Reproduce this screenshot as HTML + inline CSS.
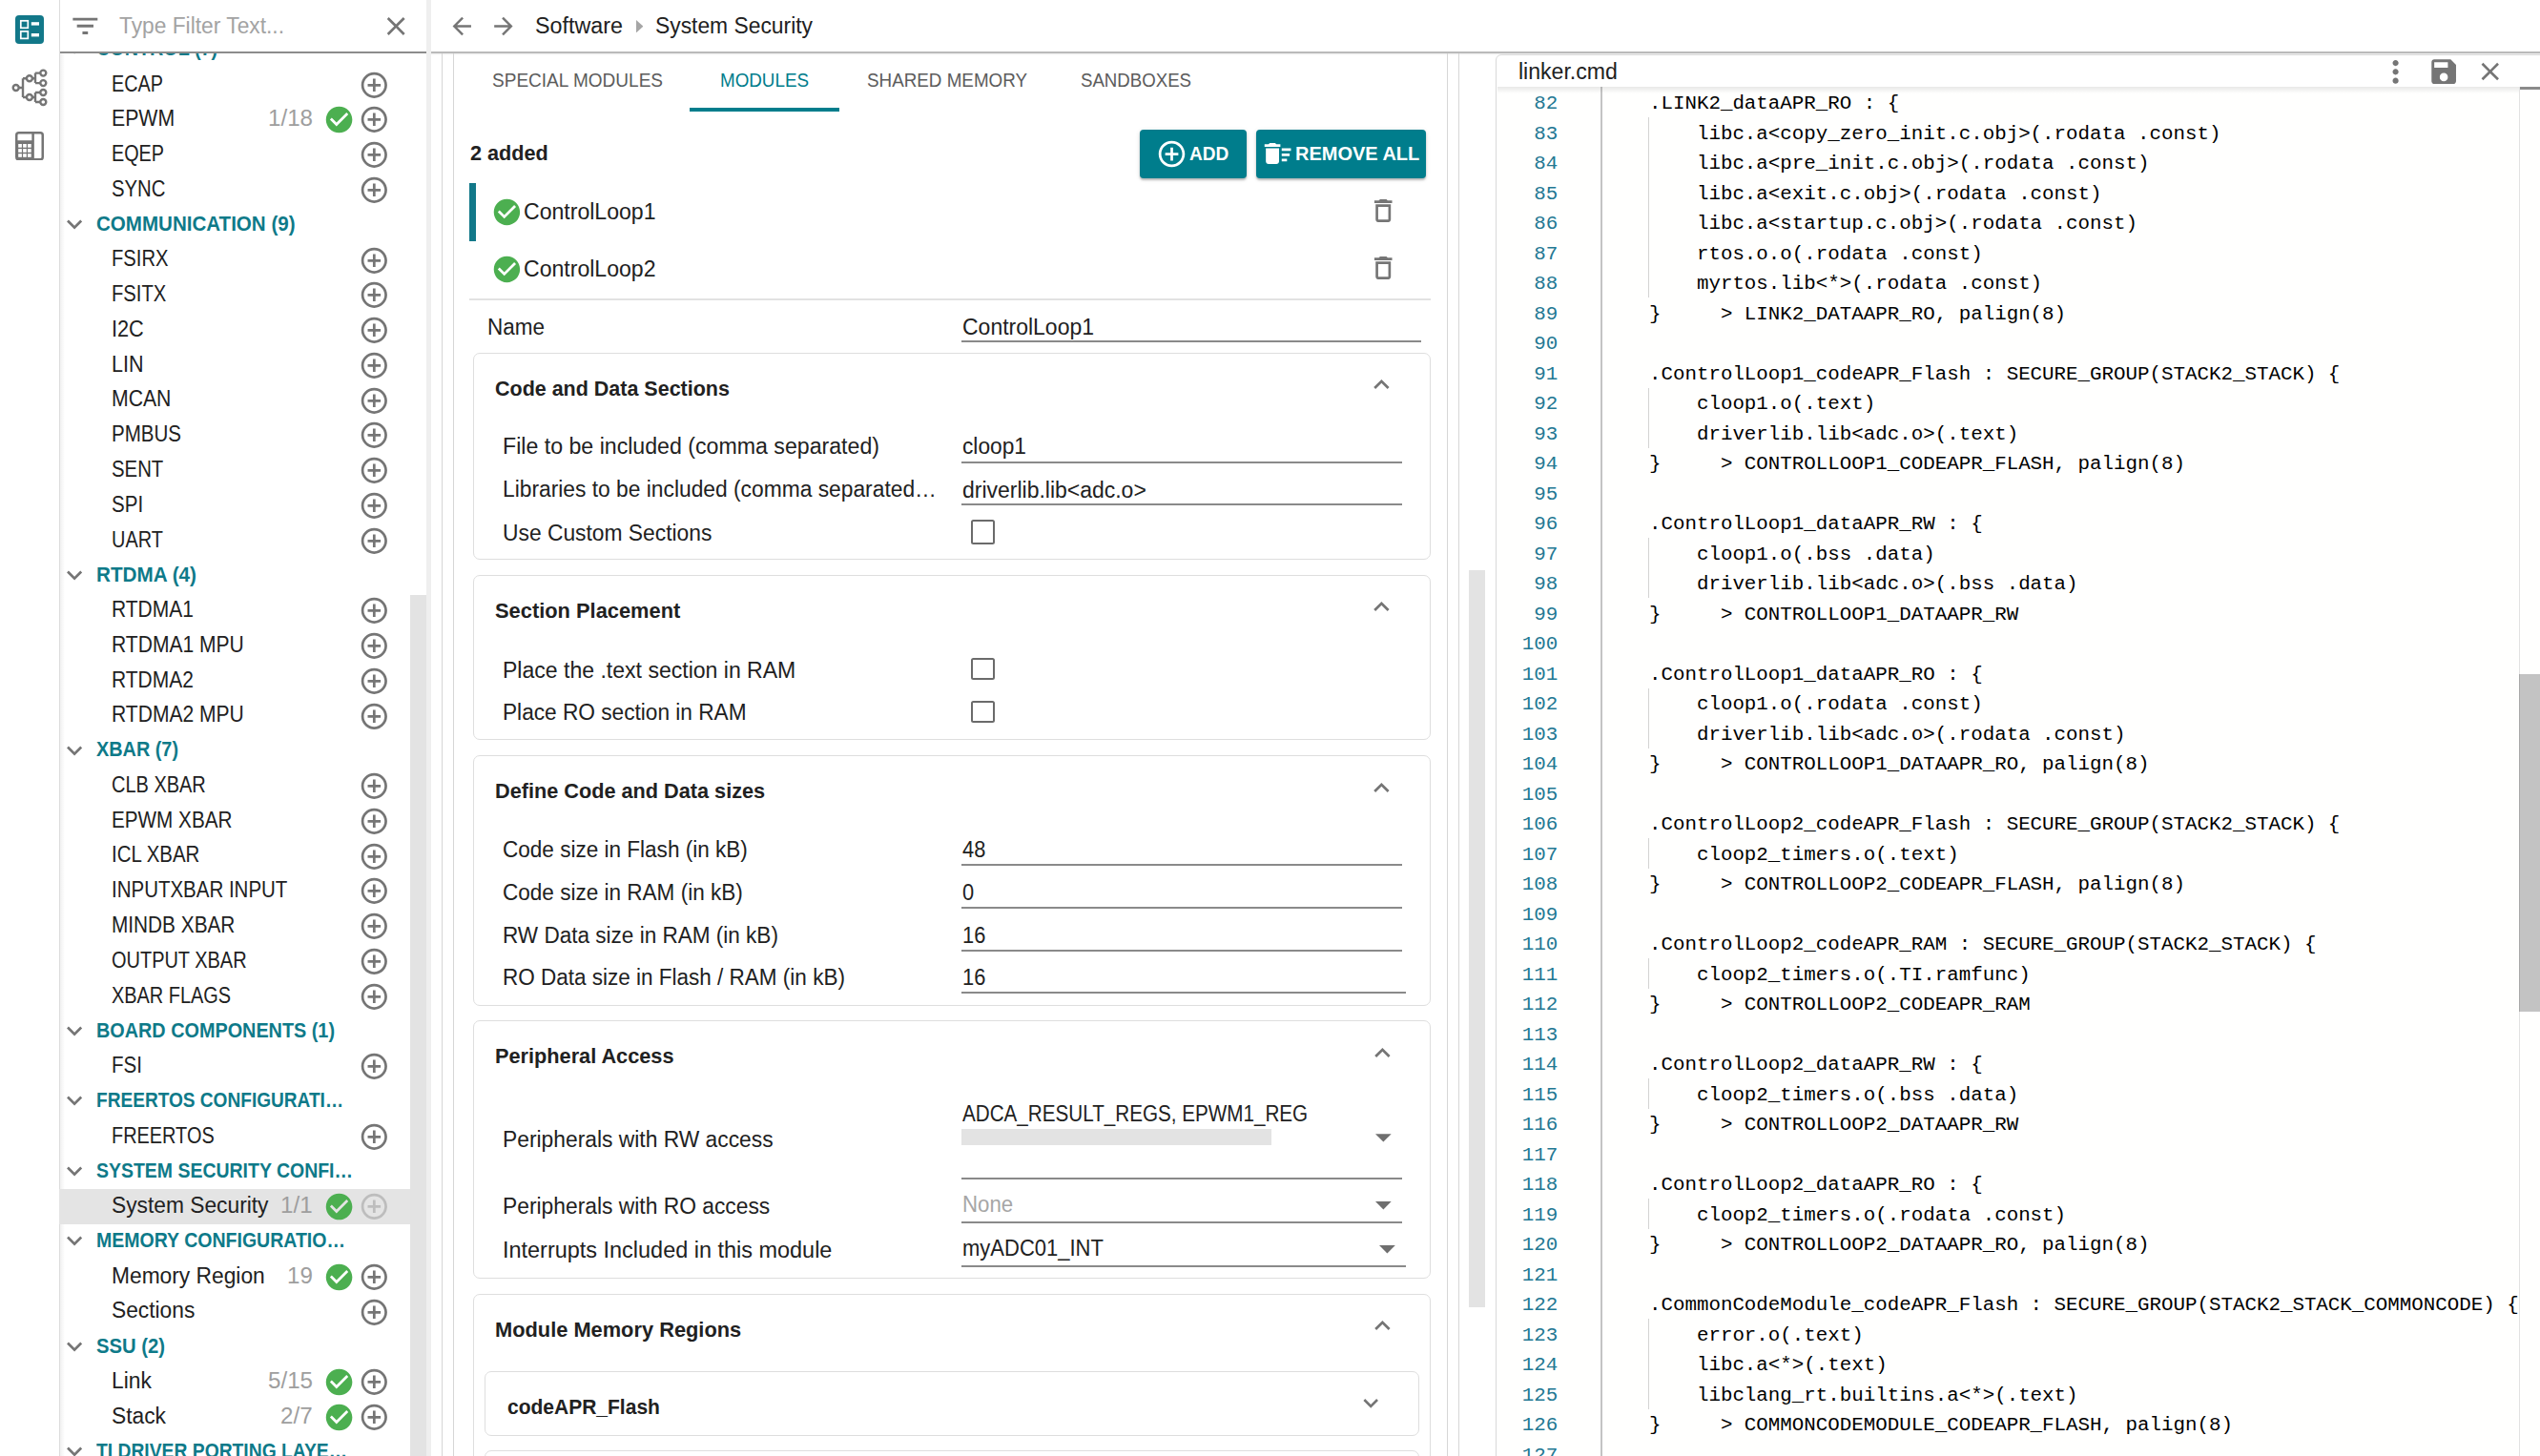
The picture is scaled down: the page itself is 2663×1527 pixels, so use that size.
<!DOCTYPE html>
<html><head><meta charset="utf-8"><title>System Security</title><style>
*{margin:0;padding:0;box-sizing:border-box}
html,body{width:2663px;height:1527px;overflow:hidden;background:#fff;font-family:"Liberation Sans",sans-serif;color:#212121}
.a{position:absolute}
.t{position:absolute;white-space:nowrap;line-height:1;transform-origin:0 0}
.m{position:absolute;white-space:pre;font-family:"Liberation Mono",monospace;line-height:31.5px;font-size:20.82px}
</style></head><body>
<div class="a" style="left:62.00px;top:0.00px;width:1.00px;height:1527.00px;background:#dcdcdc"></div>
<div class="a" style="left:63.00px;top:55.00px;width:5.00px;height:1472.00px;background:linear-gradient(90deg,rgba(0,0,0,.06),rgba(0,0,0,0))"></div>
<svg class="a" style="left:16.00px;top:16.00px;" width="30.00" height="30.00" viewBox="0 0 30 30"><rect x="0" y="0" width="30" height="30" rx="4" fill="#127889"/><rect x="5.8" y="5.8" width="7.5" height="7.5" fill="none" stroke="#fff" stroke-width="1.7"/><rect x="5.8" y="16.9" width="7.5" height="7.5" fill="none" stroke="#fff" stroke-width="1.7"/><rect x="16.8" y="7.2" width="8.2" height="3.4" fill="#fff"/><rect x="16.8" y="19" width="8.2" height="3.4" fill="#fff"/></svg>
<svg class="a" style="left:10.00px;top:70.00px;" width="44.00" height="44.00" viewBox="10 70 44 44"><g fill="none" stroke="#757575" stroke-width="2.4"><circle cx="16.7" cy="92" r="3"/><circle cx="30.9" cy="82.2" r="3"/><circle cx="30.9" cy="102" r="3"/><circle cx="45.3" cy="76.6" r="3"/><circle cx="45.3" cy="87.1" r="3"/><circle cx="45.3" cy="97" r="3"/><circle cx="45.3" cy="107" r="3"/><path d="M19.7 92H24M24 82.2V102M24 82.2h3.9M24 102h3.9"/><path d="M33.9 82.2H37M37 76.6V87.1M37 76.6h5.3M37 87.1h5.3"/><path d="M33.9 102H37M37 97V107M37 97h5.3M37 107h5.3"/></g></svg>
<svg class="a" style="left:16.00px;top:137.80px;" width="30.00" height="30.50" viewBox="0 0 30 30.5"><g fill="none" stroke="#757575" stroke-width="2.5"><rect x="1.25" y="1.25" width="27.5" height="28" rx="2.5"/><path d="M18.6 1.25V29.25M1.25 10.6H18.6"/></g><rect x="1.25" y="10.6" width="17.4" height="18.6" fill="#757575"/><g fill="#fff"><rect x="3.2" y="13" width="3.7" height="3.7"/><rect x="8.1" y="13" width="3.7" height="3.7"/><rect x="13" y="13" width="3.7" height="3.7"/><rect x="3.2" y="18.1" width="3.7" height="3.7"/><rect x="8.1" y="18.1" width="3.7" height="3.7"/><rect x="13" y="18.1" width="3.7" height="3.7"/><rect x="3.2" y="23.2" width="3.7" height="3.6"/><rect x="8.1" y="23.2" width="3.7" height="3.6"/><rect x="13" y="23.2" width="3.7" height="3.6"/></g></svg>
<div class="a" style="left:62px;top:56px;width:368px;height:1471px;overflow:hidden">
<svg class="a" style="left:0.45px;top:-20.76px;" width="32.20" height="32.39" viewBox="0 0 24 24"><path fill="#757575" d="M16.59 8.59L12 13.17 7.41 8.59 6 10l6 6 6-6z"/></svg>
<div class="t" style="left:38.70px;top:-14.97px;font-size:21.5px;font-weight:700;transform:scaleX(0.9200);color:#0e7a89;">CONTROL (7)</div>
<div class="t" style="left:54.50px;top:20.53px;font-size:23px;transform:scaleX(0.8600);color:#212121;">ECAP</div>
<svg class="a" style="left:313.98px;top:16.68px;" width="32.64" height="32.64" viewBox="0 0 24 24"><path fill="#757575" d="M13 7h-2v4H7v2h4v4h2v-4h4v-2h-4V7zm-1-5C6.48 2 2 6.48 2 12s4.48 10 10 10 10-4.48 10-10S17.52 2 12 2zm0 18c-4.41 0-8-3.59-8-8s3.59-8 8-8 8 3.59 8 8-3.59 8-8 8z"/></svg>
<div class="t" style="left:54.50px;top:57.30px;font-size:23px;transform:scaleX(0.9248);color:#212121;">EPWM</div>
<svg class="a" style="left:313.98px;top:53.45px;" width="32.64" height="32.64" viewBox="0 0 24 24"><path fill="#757575" d="M13 7h-2v4H7v2h4v4h2v-4h4v-2h-4V7zm-1-5C6.48 2 2 6.48 2 12s4.48 10 10 10 10-4.48 10-10S17.52 2 12 2zm0 18c-4.41 0-8-3.59-8-8s3.59-8 8-8 8 3.59 8 8-3.59 8-8 8z"/></svg>
<div class="t" style="left:218.50px;top:57.30px;font-size:23px;transform:scaleX(1.0500);color:#9e9e9e;">1/18</div>
<svg class="a" style="left:276.84px;top:53.21px;" width="33.12" height="33.12" viewBox="0 0 24 24"><path fill="#4caf50" d="M12 2C6.48 2 2 6.48 2 12s4.48 10 10 10 10-4.48 10-10S17.52 2 12 2zm-2 15l-5-5 1.41-1.41L10 14.17l7.59-7.59L19 8l-9 9z"/></svg>
<div class="t" style="left:54.50px;top:94.07px;font-size:23px;transform:scaleX(0.8600);color:#212121;">EQEP</div>
<svg class="a" style="left:313.98px;top:90.22px;" width="32.64" height="32.64" viewBox="0 0 24 24"><path fill="#757575" d="M13 7h-2v4H7v2h4v4h2v-4h4v-2h-4V7zm-1-5C6.48 2 2 6.48 2 12s4.48 10 10 10 10-4.48 10-10S17.52 2 12 2zm0 18c-4.41 0-8-3.59-8-8s3.59-8 8-8 8 3.59 8 8-3.59 8-8 8z"/></svg>
<div class="t" style="left:54.50px;top:130.84px;font-size:23px;transform:scaleX(0.8834);color:#212121;">SYNC</div>
<svg class="a" style="left:313.98px;top:126.99px;" width="32.64" height="32.64" viewBox="0 0 24 24"><path fill="#757575" d="M13 7h-2v4H7v2h4v4h2v-4h4v-2h-4V7zm-1-5C6.48 2 2 6.48 2 12s4.48 10 10 10 10-4.48 10-10S17.52 2 12 2zm0 18c-4.41 0-8-3.59-8-8s3.59-8 8-8 8 3.59 8 8-3.59 8-8 8z"/></svg>
<svg class="a" style="left:0.45px;top:163.09px;" width="32.20" height="32.39" viewBox="0 0 24 24"><path fill="#757575" d="M16.59 8.59L12 13.17 7.41 8.59 6 10l6 6 6-6z"/></svg>
<div class="t" style="left:38.70px;top:168.88px;font-size:21.5px;font-weight:700;transform:scaleX(0.9557);color:#0e7a89;">COMMUNICATION (9)</div>
<div class="t" style="left:54.50px;top:204.38px;font-size:23px;transform:scaleX(0.8779);color:#212121;">FSIRX</div>
<svg class="a" style="left:313.98px;top:200.53px;" width="32.64" height="32.64" viewBox="0 0 24 24"><path fill="#757575" d="M13 7h-2v4H7v2h4v4h2v-4h4v-2h-4V7zm-1-5C6.48 2 2 6.48 2 12s4.48 10 10 10 10-4.48 10-10S17.52 2 12 2zm0 18c-4.41 0-8-3.59-8-8s3.59-8 8-8 8 3.59 8 8-3.59 8-8 8z"/></svg>
<div class="t" style="left:54.50px;top:241.15px;font-size:23px;transform:scaleX(0.8786);color:#212121;">FSITX</div>
<svg class="a" style="left:313.98px;top:237.30px;" width="32.64" height="32.64" viewBox="0 0 24 24"><path fill="#757575" d="M13 7h-2v4H7v2h4v4h2v-4h4v-2h-4V7zm-1-5C6.48 2 2 6.48 2 12s4.48 10 10 10 10-4.48 10-10S17.52 2 12 2zm0 18c-4.41 0-8-3.59-8-8s3.59-8 8-8 8 3.59 8 8-3.59 8-8 8z"/></svg>
<div class="t" style="left:54.50px;top:277.92px;font-size:23px;transform:scaleX(0.9440);color:#212121;">I2C</div>
<svg class="a" style="left:313.98px;top:274.07px;" width="32.64" height="32.64" viewBox="0 0 24 24"><path fill="#757575" d="M13 7h-2v4H7v2h4v4h2v-4h4v-2h-4V7zm-1-5C6.48 2 2 6.48 2 12s4.48 10 10 10 10-4.48 10-10S17.52 2 12 2zm0 18c-4.41 0-8-3.59-8-8s3.59-8 8-8 8 3.59 8 8-3.59 8-8 8z"/></svg>
<div class="t" style="left:54.50px;top:314.69px;font-size:23px;transform:scaleX(0.9357);color:#212121;">LIN</div>
<svg class="a" style="left:313.98px;top:310.84px;" width="32.64" height="32.64" viewBox="0 0 24 24"><path fill="#757575" d="M13 7h-2v4H7v2h4v4h2v-4h4v-2h-4V7zm-1-5C6.48 2 2 6.48 2 12s4.48 10 10 10 10-4.48 10-10S17.52 2 12 2zm0 18c-4.41 0-8-3.59-8-8s3.59-8 8-8 8 3.59 8 8-3.59 8-8 8z"/></svg>
<div class="t" style="left:54.50px;top:351.46px;font-size:23px;transform:scaleX(0.9217);color:#212121;">MCAN</div>
<svg class="a" style="left:313.98px;top:347.61px;" width="32.64" height="32.64" viewBox="0 0 24 24"><path fill="#757575" d="M13 7h-2v4H7v2h4v4h2v-4h4v-2h-4V7zm-1-5C6.48 2 2 6.48 2 12s4.48 10 10 10 10-4.48 10-10S17.52 2 12 2zm0 18c-4.41 0-8-3.59-8-8s3.59-8 8-8 8 3.59 8 8-3.59 8-8 8z"/></svg>
<div class="t" style="left:54.50px;top:388.23px;font-size:23px;transform:scaleX(0.8928);color:#212121;">PMBUS</div>
<svg class="a" style="left:313.98px;top:384.38px;" width="32.64" height="32.64" viewBox="0 0 24 24"><path fill="#757575" d="M13 7h-2v4H7v2h4v4h2v-4h4v-2h-4V7zm-1-5C6.48 2 2 6.48 2 12s4.48 10 10 10 10-4.48 10-10S17.52 2 12 2zm0 18c-4.41 0-8-3.59-8-8s3.59-8 8-8 8 3.59 8 8-3.59 8-8 8z"/></svg>
<div class="t" style="left:54.50px;top:425.00px;font-size:23px;transform:scaleX(0.8844);color:#212121;">SENT</div>
<svg class="a" style="left:313.98px;top:421.15px;" width="32.64" height="32.64" viewBox="0 0 24 24"><path fill="#757575" d="M13 7h-2v4H7v2h4v4h2v-4h4v-2h-4V7zm-1-5C6.48 2 2 6.48 2 12s4.48 10 10 10 10-4.48 10-10S17.52 2 12 2zm0 18c-4.41 0-8-3.59-8-8s3.59-8 8-8 8 3.59 8 8-3.59 8-8 8z"/></svg>
<div class="t" style="left:54.50px;top:461.77px;font-size:23px;transform:scaleX(0.8927);color:#212121;">SPI</div>
<svg class="a" style="left:313.98px;top:457.92px;" width="32.64" height="32.64" viewBox="0 0 24 24"><path fill="#757575" d="M13 7h-2v4H7v2h4v4h2v-4h4v-2h-4V7zm-1-5C6.48 2 2 6.48 2 12s4.48 10 10 10 10-4.48 10-10S17.52 2 12 2zm0 18c-4.41 0-8-3.59-8-8s3.59-8 8-8 8 3.59 8 8-3.59 8-8 8z"/></svg>
<div class="t" style="left:54.50px;top:498.54px;font-size:23px;transform:scaleX(0.8657);color:#212121;">UART</div>
<svg class="a" style="left:313.98px;top:494.69px;" width="32.64" height="32.64" viewBox="0 0 24 24"><path fill="#757575" d="M13 7h-2v4H7v2h4v4h2v-4h4v-2h-4V7zm-1-5C6.48 2 2 6.48 2 12s4.48 10 10 10 10-4.48 10-10S17.52 2 12 2zm0 18c-4.41 0-8-3.59-8-8s3.59-8 8-8 8 3.59 8 8-3.59 8-8 8z"/></svg>
<svg class="a" style="left:0.45px;top:530.79px;" width="32.20" height="32.39" viewBox="0 0 24 24"><path fill="#757575" d="M16.59 8.59L12 13.17 7.41 8.59 6 10l6 6 6-6z"/></svg>
<div class="t" style="left:38.70px;top:536.58px;font-size:21.5px;font-weight:700;transform:scaleX(0.9626);color:#0e7a89;">RTDMA (4)</div>
<div class="t" style="left:54.50px;top:572.08px;font-size:23px;transform:scaleX(0.9113);color:#212121;">RTDMA1</div>
<svg class="a" style="left:313.98px;top:568.23px;" width="32.64" height="32.64" viewBox="0 0 24 24"><path fill="#757575" d="M13 7h-2v4H7v2h4v4h2v-4h4v-2h-4V7zm-1-5C6.48 2 2 6.48 2 12s4.48 10 10 10 10-4.48 10-10S17.52 2 12 2zm0 18c-4.41 0-8-3.59-8-8s3.59-8 8-8 8 3.59 8 8-3.59 8-8 8z"/></svg>
<div class="t" style="left:54.50px;top:608.85px;font-size:23px;transform:scaleX(0.9154);color:#212121;">RTDMA1 MPU</div>
<svg class="a" style="left:313.98px;top:605.00px;" width="32.64" height="32.64" viewBox="0 0 24 24"><path fill="#757575" d="M13 7h-2v4H7v2h4v4h2v-4h4v-2h-4V7zm-1-5C6.48 2 2 6.48 2 12s4.48 10 10 10 10-4.48 10-10S17.52 2 12 2zm0 18c-4.41 0-8-3.59-8-8s3.59-8 8-8 8 3.59 8 8-3.59 8-8 8z"/></svg>
<div class="t" style="left:54.50px;top:645.62px;font-size:23px;transform:scaleX(0.9113);color:#212121;">RTDMA2</div>
<svg class="a" style="left:313.98px;top:641.77px;" width="32.64" height="32.64" viewBox="0 0 24 24"><path fill="#757575" d="M13 7h-2v4H7v2h4v4h2v-4h4v-2h-4V7zm-1-5C6.48 2 2 6.48 2 12s4.48 10 10 10 10-4.48 10-10S17.52 2 12 2zm0 18c-4.41 0-8-3.59-8-8s3.59-8 8-8 8 3.59 8 8-3.59 8-8 8z"/></svg>
<div class="t" style="left:54.50px;top:682.39px;font-size:23px;transform:scaleX(0.9154);color:#212121;">RTDMA2 MPU</div>
<svg class="a" style="left:313.98px;top:678.54px;" width="32.64" height="32.64" viewBox="0 0 24 24"><path fill="#757575" d="M13 7h-2v4H7v2h4v4h2v-4h4v-2h-4V7zm-1-5C6.48 2 2 6.48 2 12s4.48 10 10 10 10-4.48 10-10S17.52 2 12 2zm0 18c-4.41 0-8-3.59-8-8s3.59-8 8-8 8 3.59 8 8-3.59 8-8 8z"/></svg>
<svg class="a" style="left:0.45px;top:714.64px;" width="32.20" height="32.39" viewBox="0 0 24 24"><path fill="#757575" d="M16.59 8.59L12 13.17 7.41 8.59 6 10l6 6 6-6z"/></svg>
<div class="t" style="left:38.70px;top:720.43px;font-size:21.5px;font-weight:700;transform:scaleX(0.9230);color:#0e7a89;">XBAR (7)</div>
<div class="t" style="left:54.50px;top:755.93px;font-size:23px;transform:scaleX(0.8679);color:#212121;">CLB XBAR</div>
<svg class="a" style="left:313.98px;top:752.08px;" width="32.64" height="32.64" viewBox="0 0 24 24"><path fill="#757575" d="M13 7h-2v4H7v2h4v4h2v-4h4v-2h-4V7zm-1-5C6.48 2 2 6.48 2 12s4.48 10 10 10 10-4.48 10-10S17.52 2 12 2zm0 18c-4.41 0-8-3.59-8-8s3.59-8 8-8 8 3.59 8 8-3.59 8-8 8z"/></svg>
<div class="t" style="left:54.50px;top:792.70px;font-size:23px;transform:scaleX(0.8993);color:#212121;">EPWM XBAR</div>
<svg class="a" style="left:313.98px;top:788.85px;" width="32.64" height="32.64" viewBox="0 0 24 24"><path fill="#757575" d="M13 7h-2v4H7v2h4v4h2v-4h4v-2h-4V7zm-1-5C6.48 2 2 6.48 2 12s4.48 10 10 10 10-4.48 10-10S17.52 2 12 2zm0 18c-4.41 0-8-3.59-8-8s3.59-8 8-8 8 3.59 8 8-3.59 8-8 8z"/></svg>
<div class="t" style="left:54.50px;top:829.47px;font-size:23px;transform:scaleX(0.8873);color:#212121;">ICL XBAR</div>
<svg class="a" style="left:313.98px;top:825.62px;" width="32.64" height="32.64" viewBox="0 0 24 24"><path fill="#757575" d="M13 7h-2v4H7v2h4v4h2v-4h4v-2h-4V7zm-1-5C6.48 2 2 6.48 2 12s4.48 10 10 10 10-4.48 10-10S17.52 2 12 2zm0 18c-4.41 0-8-3.59-8-8s3.59-8 8-8 8 3.59 8 8-3.59 8-8 8z"/></svg>
<div class="t" style="left:54.50px;top:866.24px;font-size:23px;transform:scaleX(0.8905);color:#212121;">INPUTXBAR INPUT</div>
<svg class="a" style="left:313.98px;top:862.39px;" width="32.64" height="32.64" viewBox="0 0 24 24"><path fill="#757575" d="M13 7h-2v4H7v2h4v4h2v-4h4v-2h-4V7zm-1-5C6.48 2 2 6.48 2 12s4.48 10 10 10 10-4.48 10-10S17.52 2 12 2zm0 18c-4.41 0-8-3.59-8-8s3.59-8 8-8 8 3.59 8 8-3.59 8-8 8z"/></svg>
<div class="t" style="left:54.50px;top:903.01px;font-size:23px;transform:scaleX(0.9039);color:#212121;">MINDB XBAR</div>
<svg class="a" style="left:313.98px;top:899.16px;" width="32.64" height="32.64" viewBox="0 0 24 24"><path fill="#757575" d="M13 7h-2v4H7v2h4v4h2v-4h4v-2h-4V7zm-1-5C6.48 2 2 6.48 2 12s4.48 10 10 10 10-4.48 10-10S17.52 2 12 2zm0 18c-4.41 0-8-3.59-8-8s3.59-8 8-8 8 3.59 8 8-3.59 8-8 8z"/></svg>
<div class="t" style="left:54.50px;top:939.78px;font-size:23px;transform:scaleX(0.8677);color:#212121;">OUTPUT XBAR</div>
<svg class="a" style="left:313.98px;top:935.93px;" width="32.64" height="32.64" viewBox="0 0 24 24"><path fill="#757575" d="M13 7h-2v4H7v2h4v4h2v-4h4v-2h-4V7zm-1-5C6.48 2 2 6.48 2 12s4.48 10 10 10 10-4.48 10-10S17.52 2 12 2zm0 18c-4.41 0-8-3.59-8-8s3.59-8 8-8 8 3.59 8 8-3.59 8-8 8z"/></svg>
<div class="t" style="left:54.50px;top:976.55px;font-size:23px;transform:scaleX(0.8662);color:#212121;">XBAR FLAGS</div>
<svg class="a" style="left:313.98px;top:972.70px;" width="32.64" height="32.64" viewBox="0 0 24 24"><path fill="#757575" d="M13 7h-2v4H7v2h4v4h2v-4h4v-2h-4V7zm-1-5C6.48 2 2 6.48 2 12s4.48 10 10 10 10-4.48 10-10S17.52 2 12 2zm0 18c-4.41 0-8-3.59-8-8s3.59-8 8-8 8 3.59 8 8-3.59 8-8 8z"/></svg>
<svg class="a" style="left:0.45px;top:1008.80px;" width="32.20" height="32.39" viewBox="0 0 24 24"><path fill="#757575" d="M16.59 8.59L12 13.17 7.41 8.59 6 10l6 6 6-6z"/></svg>
<div class="t" style="left:38.70px;top:1014.59px;font-size:21.5px;font-weight:700;transform:scaleX(0.9220);color:#0e7a89;">BOARD COMPONENTS (1)</div>
<div class="t" style="left:54.50px;top:1050.09px;font-size:23px;transform:scaleX(0.8939);color:#212121;">FSI</div>
<svg class="a" style="left:313.98px;top:1046.24px;" width="32.64" height="32.64" viewBox="0 0 24 24"><path fill="#757575" d="M13 7h-2v4H7v2h4v4h2v-4h4v-2h-4V7zm-1-5C6.48 2 2 6.48 2 12s4.48 10 10 10 10-4.48 10-10S17.52 2 12 2zm0 18c-4.41 0-8-3.59-8-8s3.59-8 8-8 8 3.59 8 8-3.59 8-8 8z"/></svg>
<svg class="a" style="left:0.45px;top:1082.34px;" width="32.20" height="32.39" viewBox="0 0 24 24"><path fill="#757575" d="M16.59 8.59L12 13.17 7.41 8.59 6 10l6 6 6-6z"/></svg>
<div class="t" style="left:38.70px;top:1088.13px;font-size:21.5px;font-weight:700;transform:scaleX(0.8874);color:#0e7a89;">FREERTOS CONFIGURATI…</div>
<div class="t" style="left:54.50px;top:1123.63px;font-size:23px;transform:scaleX(0.8657);color:#212121;">FREERTOS</div>
<svg class="a" style="left:313.98px;top:1119.78px;" width="32.64" height="32.64" viewBox="0 0 24 24"><path fill="#757575" d="M13 7h-2v4H7v2h4v4h2v-4h4v-2h-4V7zm-1-5C6.48 2 2 6.48 2 12s4.48 10 10 10 10-4.48 10-10S17.52 2 12 2zm0 18c-4.41 0-8-3.59-8-8s3.59-8 8-8 8 3.59 8 8-3.59 8-8 8z"/></svg>
<svg class="a" style="left:0.45px;top:1155.88px;" width="32.20" height="32.39" viewBox="0 0 24 24"><path fill="#757575" d="M16.59 8.59L12 13.17 7.41 8.59 6 10l6 6 6-6z"/></svg>
<div class="t" style="left:38.70px;top:1161.67px;font-size:21.5px;font-weight:700;transform:scaleX(0.9055);color:#0e7a89;">SYSTEM SECURITY CONFI…</div>
<div class="a" style="left:0.00px;top:1190.84px;width:368.00px;height:37.40px;background:#e4e4e4"></div>
<div class="t" style="left:54.50px;top:1197.17px;font-size:23px;transform:scaleX(0.9900);color:#212121;">System Security</div>
<svg class="a" style="left:313.98px;top:1193.32px;" width="32.64" height="32.64" viewBox="0 0 24 24"><path fill="#bdbdbd" d="M13 7h-2v4H7v2h4v4h2v-4h4v-2h-4V7zm-1-5C6.48 2 2 6.48 2 12s4.48 10 10 10 10-4.48 10-10S17.52 2 12 2zm0 18c-4.41 0-8-3.59-8-8s3.59-8 8-8 8 3.59 8 8-3.59 8-8 8z"/></svg>
<div class="t" style="left:231.93px;top:1197.17px;font-size:23px;transform:scaleX(1.0500);color:#9e9e9e;">1/1</div>
<svg class="a" style="left:276.84px;top:1193.08px;" width="33.12" height="33.12" viewBox="0 0 24 24"><path fill="#4caf50" d="M12 2C6.48 2 2 6.48 2 12s4.48 10 10 10 10-4.48 10-10S17.52 2 12 2zm-2 15l-5-5 1.41-1.41L10 14.17l7.59-7.59L19 8l-9 9z"/></svg>
<svg class="a" style="left:0.45px;top:1229.42px;" width="32.20" height="32.39" viewBox="0 0 24 24"><path fill="#757575" d="M16.59 8.59L12 13.17 7.41 8.59 6 10l6 6 6-6z"/></svg>
<div class="t" style="left:38.70px;top:1235.21px;font-size:21.5px;font-weight:700;transform:scaleX(0.9079);color:#0e7a89;">MEMORY CONFIGURATIO…</div>
<div class="t" style="left:54.50px;top:1270.71px;font-size:23px;transform:scaleX(0.9900);color:#212121;">Memory Region</div>
<svg class="a" style="left:313.98px;top:1266.86px;" width="32.64" height="32.64" viewBox="0 0 24 24"><path fill="#757575" d="M13 7h-2v4H7v2h4v4h2v-4h4v-2h-4V7zm-1-5C6.48 2 2 6.48 2 12s4.48 10 10 10 10-4.48 10-10S17.52 2 12 2zm0 18c-4.41 0-8-3.59-8-8s3.59-8 8-8 8 3.59 8 8-3.59 8-8 8z"/></svg>
<div class="t" style="left:238.64px;top:1270.71px;font-size:23px;transform:scaleX(1.0500);color:#9e9e9e;">19</div>
<svg class="a" style="left:276.84px;top:1266.62px;" width="33.12" height="33.12" viewBox="0 0 24 24"><path fill="#4caf50" d="M12 2C6.48 2 2 6.48 2 12s4.48 10 10 10 10-4.48 10-10S17.52 2 12 2zm-2 15l-5-5 1.41-1.41L10 14.17l7.59-7.59L19 8l-9 9z"/></svg>
<div class="t" style="left:54.50px;top:1307.48px;font-size:23px;transform:scaleX(0.9900);color:#212121;">Sections</div>
<svg class="a" style="left:313.98px;top:1303.63px;" width="32.64" height="32.64" viewBox="0 0 24 24"><path fill="#757575" d="M13 7h-2v4H7v2h4v4h2v-4h4v-2h-4V7zm-1-5C6.48 2 2 6.48 2 12s4.48 10 10 10 10-4.48 10-10S17.52 2 12 2zm0 18c-4.41 0-8-3.59-8-8s3.59-8 8-8 8 3.59 8 8-3.59 8-8 8z"/></svg>
<svg class="a" style="left:0.45px;top:1339.73px;" width="32.20" height="32.39" viewBox="0 0 24 24"><path fill="#757575" d="M16.59 8.59L12 13.17 7.41 8.59 6 10l6 6 6-6z"/></svg>
<div class="t" style="left:38.70px;top:1345.52px;font-size:21.5px;font-weight:700;transform:scaleX(0.9417);color:#0e7a89;">SSU (2)</div>
<div class="t" style="left:54.50px;top:1381.02px;font-size:23px;transform:scaleX(0.9900);color:#212121;">Link</div>
<svg class="a" style="left:313.98px;top:1377.17px;" width="32.64" height="32.64" viewBox="0 0 24 24"><path fill="#757575" d="M13 7h-2v4H7v2h4v4h2v-4h4v-2h-4V7zm-1-5C6.48 2 2 6.48 2 12s4.48 10 10 10 10-4.48 10-10S17.52 2 12 2zm0 18c-4.41 0-8-3.59-8-8s3.59-8 8-8 8 3.59 8 8-3.59 8-8 8z"/></svg>
<div class="t" style="left:218.50px;top:1381.02px;font-size:23px;transform:scaleX(1.0500);color:#9e9e9e;">5/15</div>
<svg class="a" style="left:276.84px;top:1376.93px;" width="33.12" height="33.12" viewBox="0 0 24 24"><path fill="#4caf50" d="M12 2C6.48 2 2 6.48 2 12s4.48 10 10 10 10-4.48 10-10S17.52 2 12 2zm-2 15l-5-5 1.41-1.41L10 14.17l7.59-7.59L19 8l-9 9z"/></svg>
<div class="t" style="left:54.50px;top:1417.79px;font-size:23px;transform:scaleX(0.9900);color:#212121;">Stack</div>
<svg class="a" style="left:313.98px;top:1413.94px;" width="32.64" height="32.64" viewBox="0 0 24 24"><path fill="#757575" d="M13 7h-2v4H7v2h4v4h2v-4h4v-2h-4V7zm-1-5C6.48 2 2 6.48 2 12s4.48 10 10 10 10-4.48 10-10S17.52 2 12 2zm0 18c-4.41 0-8-3.59-8-8s3.59-8 8-8 8 3.59 8 8-3.59 8-8 8z"/></svg>
<div class="t" style="left:231.93px;top:1417.79px;font-size:23px;transform:scaleX(1.0500);color:#9e9e9e;">2/7</div>
<svg class="a" style="left:276.84px;top:1413.70px;" width="33.12" height="33.12" viewBox="0 0 24 24"><path fill="#4caf50" d="M12 2C6.48 2 2 6.48 2 12s4.48 10 10 10 10-4.48 10-10S17.52 2 12 2zm-2 15l-5-5 1.41-1.41L10 14.17l7.59-7.59L19 8l-9 9z"/></svg>
<svg class="a" style="left:0.45px;top:1450.04px;" width="32.20" height="32.39" viewBox="0 0 24 24"><path fill="#757575" d="M16.59 8.59L12 13.17 7.41 8.59 6 10l6 6 6-6z"/></svg>
<div class="t" style="left:38.70px;top:1455.83px;font-size:21.5px;font-weight:700;transform:scaleX(0.8974);color:#0e7a89;">TI DRIVER PORTING LAYE…</div>
</div>
<div class="a" style="left:63.00px;top:0.00px;width:384.00px;height:54.00px;background:#fff"></div>
<div class="a" style="left:63.00px;top:54.00px;width:384.00px;height:1.80px;background:#8c8c8c"></div>
<svg class="a" style="left:71.67px;top:10.35px;" width="34.67" height="34.60" viewBox="0 0 24 24"><path fill="#757575" d="M10 18h4v-2h-4v2zM3 6v2h18V6H3zm3 7h12v-2H6v2z"/></svg>
<div class="t" style="left:125.00px;top:16.23px;font-size:23px;transform:scaleX(0.9903);color:#a3a3a3;">Type Filter Text...</div>
<svg class="a" style="left:398.55px;top:11.34px;" width="32.40" height="32.91" viewBox="0 0 24 24"><path fill="#757575" d="M19 6.41L17.59 5 12 10.59 6.41 5 5 6.41 10.59 12 5 17.59 6.41 19 12 13.41 17.59 19 19 17.59 13.41 12z"/></svg>
<div class="a" style="left:430.00px;top:624.00px;width:17.00px;height:903.00px;background:#e3e3e3"></div>
<div class="a" style="left:447.00px;top:0.00px;width:5.00px;height:1527.00px;background:#efefef"></div>
<div class="a" style="left:452.00px;top:0.00px;width:2211.00px;height:54.20px;background:#fff"></div>
<div class="a" style="left:452.00px;top:54.00px;width:2211.00px;height:1.80px;background:#bababa"></div>
<div class="a" style="left:452.00px;top:55.80px;width:2211.00px;height:2.50px;background:linear-gradient(180deg,rgba(0,0,0,.08),rgba(0,0,0,0))"></div>
<svg class="a" style="left:467.25px;top:12.75px;" width="34.50" height="29.10" viewBox="0 0 24 24"><path fill="#757575" d="M20 11H7.83l5.59-5.59L12 4l-8 8 8 8 1.41-1.41L7.83 13H20v-2z"/></svg>
<svg class="a" style="left:511.38px;top:12.75px;" width="33.75" height="29.10" viewBox="0 0 24 24"><path fill="#757575" d="M12 4l-1.41 1.41L16.17 11H4v2h12.17l-5.58 5.59L12 20l8-8z"/></svg>
<div class="t" style="left:561.00px;top:15.53px;font-size:23px;transform:scaleX(1.0125);color:#212121;">Software</div>
<svg class="a" style="left:666.90px;top:20.70px;" width="7.40" height="13.40" viewBox="0 0 7.4 13.4"><path d="M0 0L7.4 6.7L0 13.4z" fill="#a6a6a6"/></svg>
<div class="t" style="left:687.00px;top:15.53px;font-size:23px;transform:scaleX(0.9930);color:#212121;">System Security</div>
<div class="a" style="left:463.00px;top:55.50px;width:1.00px;height:1472.00px;background:#d6d6d6"></div>
<div class="a" style="left:475.00px;top:55.50px;width:1.00px;height:1472.00px;background:#d6d6d6"></div>
<div class="a" style="left:1517.00px;top:55.50px;width:1.00px;height:1472.00px;background:#d6d6d6"></div>
<div class="a" style="left:1529.00px;top:55.50px;width:1.00px;height:1472.00px;background:#d6d6d6"></div>
<div class="t" style="left:515.50px;top:74.79px;font-size:19.5px;transform:scaleX(0.9755);color:#5c5c5c;">SPECIAL MODULES</div>
<div class="t" style="left:755.00px;top:74.79px;font-size:19.5px;transform:scaleX(0.9644);color:#007d8c;">MODULES</div>
<div class="t" style="left:908.50px;top:74.79px;font-size:19.5px;transform:scaleX(0.9650);color:#5c5c5c;">SHARED MEMORY</div>
<div class="t" style="left:1133.00px;top:74.79px;font-size:19.5px;transform:scaleX(0.9557);color:#5c5c5c;">SANDBOXES</div>
<div class="a" style="left:723.00px;top:113.20px;width:156.60px;height:3.80px;background:#007d8c"></div>
<div class="t" style="left:493.00px;top:149.95px;font-size:22.5px;font-weight:700;transform:scaleX(0.9609);color:#212121;">2 added</div>
<div class="a" style="left:1195.00px;top:136.00px;width:111.50px;height:51.00px;background:#007d8c;border-radius:4px;box-shadow:0 2px 2px rgba(0,0,0,.22),0 1px 5px rgba(0,0,0,.12)"></div>
<div class="a" style="left:1317.00px;top:136.00px;width:177.60px;height:51.00px;background:#007d8c;border-radius:4px;box-shadow:0 2px 2px rgba(0,0,0,.22),0 1px 5px rgba(0,0,0,.12)"></div>
<svg class="a" style="left:1211.75px;top:144.95px;" width="33.00" height="33.00" viewBox="0 0 24 24"><path fill="#fff" d="M13 7h-2v4H7v2h4v4h2v-4h4v-2h-4V7zm-1-5C6.48 2 2 6.48 2 12s4.48 10 10 10 10-4.48 10-10S17.52 2 12 2zm0 18c-4.41 0-8-3.59-8-8s3.59-8 8-8 8 3.59 8 8-3.59 8-8 8z"/></svg>
<div class="t" style="left:1247.30px;top:150.97px;font-size:20px;font-weight:700;transform:scaleX(0.9531);color:#fff;">ADD</div>
<svg class="a" style="left:1322.53px;top:144.32px;" width="33.24" height="34.05" viewBox="0 0 24 24"><path fill="#fff" d="M15 16h4v2h-4zm0-8h7v2h-7zm0 4h6v2h-6zM3 18c0 1.1.9 2 2 2h6c1.1 0 2-.9 2-2V8H3v10zM14 5h-3l-1-1H6L5 5H2v2h12z"/></svg>
<div class="t" style="left:1358.00px;top:150.97px;font-size:20px;font-weight:700;transform:scaleX(0.9987);color:#fff;">REMOVE ALL</div>
<div class="a" style="left:492.00px;top:192.00px;width:7.00px;height:60.70px;background:#127889"></div>
<svg class="a" style="left:515.06px;top:205.56px;" width="32.88" height="32.88" viewBox="0 0 24 24"><path fill="#4caf50" d="M12 2C6.48 2 2 6.48 2 12s4.48 10 10 10 10-4.48 10-10S17.52 2 12 2zm-2 15l-5-5 1.41-1.41L10 14.17l7.59-7.59L19 8l-9 9z"/></svg>
<div class="t" style="left:549.00px;top:210.53px;font-size:23px;transform:scaleX(1.0029);color:#212121;">ControlLoop1</div>
<svg class="a" style="left:1433.32px;top:204.72px;" width="34.46" height="31.87" viewBox="0 0 24 24"><path fill="#757575" d="M6 19c0 1.1.9 2 2 2h8c1.1 0 2-.9 2-2V7H6v12zM8 9h8v10H8V9zm7.5-5l-1-1h-5l-1 1H5v2h14V4z"/></svg>
<svg class="a" style="left:515.06px;top:265.56px;" width="32.88" height="32.88" viewBox="0 0 24 24"><path fill="#4caf50" d="M12 2C6.48 2 2 6.48 2 12s4.48 10 10 10 10-4.48 10-10S17.52 2 12 2zm-2 15l-5-5 1.41-1.41L10 14.17l7.59-7.59L19 8l-9 9z"/></svg>
<div class="t" style="left:549.00px;top:270.53px;font-size:23px;transform:scaleX(1.0029);color:#212121;">ControlLoop2</div>
<svg class="a" style="left:1433.32px;top:264.72px;" width="34.46" height="31.87" viewBox="0 0 24 24"><path fill="#757575" d="M6 19c0 1.1.9 2 2 2h8c1.1 0 2-.9 2-2V7H6v12zM8 9h8v10H8V9zm7.5-5l-1-1h-5l-1 1H5v2h14V4z"/></svg>
<div class="a" style="left:492.00px;top:313.00px;width:1008.00px;height:1.60px;background:#e2e2e2"></div>
<div class="t" style="left:510.70px;top:331.53px;font-size:23px;transform:scaleX(0.9779);color:#212121;">Name</div>
<div class="t" style="left:1009.00px;top:331.53px;font-size:23px;transform:scaleX(0.9992);color:#212121;">ControlLoop1</div>
<div class="a" style="left:1008.00px;top:357.00px;width:482.00px;height:2.00px;background:#8a8a8a"></div>
<div class="a" style="left:495.75px;top:369.65px;width:1004.50px;height:217.50px;border:1.5px solid #dedede;border-radius:7px"></div>
<div class="t" style="left:519.30px;top:396.95px;font-size:22.5px;font-weight:700;transform:scaleX(0.9547);color:#212121;">Code and Data Sections</div>
<svg class="a" style="left:1432.40px;top:387.25px;" width="32.80" height="32.71" viewBox="0 0 24 24"><path fill="#757575" d="M12 8l-6 6 1.41 1.41L12 10.83l4.59 4.58L18 14z"/></svg>
<div class="t" style="left:526.70px;top:457.33px;font-size:23px;transform:scaleX(1.0064);color:#212121;">File to be included (comma separated)</div>
<div class="t" style="left:526.70px;top:502.43px;font-size:23px;transform:scaleX(0.9911);color:#212121;">Libraries to be included (comma separated…</div>
<div class="t" style="left:526.70px;top:547.53px;font-size:23px;transform:scaleX(0.9921);color:#212121;">Use Custom Sections</div>
<div class="t" style="left:1009.00px;top:457.33px;font-size:23px;transform:scaleX(0.9870);color:#212121;">cloop1</div>
<div class="a" style="left:1008.00px;top:484.00px;width:462.00px;height:2.00px;background:#8a8a8a"></div>
<div class="t" style="left:1009.00px;top:502.53px;font-size:23px;transform:scaleX(0.9987);color:#212121;">driverlib.lib&lt;adc.o&gt;</div>
<div class="a" style="left:1008.00px;top:528.00px;width:462.00px;height:2.00px;background:#8a8a8a"></div>
<div class="a" style="left:1018.30px;top:545.40px;width:24.50px;height:25.20px;border:2.5px solid #6b6b6b;border-radius:2.5px"></div>
<div class="a" style="left:495.75px;top:602.85px;width:1004.50px;height:173.50px;border:1.5px solid #dedede;border-radius:7px"></div>
<div class="t" style="left:519.30px;top:629.95px;font-size:22.5px;font-weight:700;transform:scaleX(0.9711);color:#212121;">Section Placement</div>
<svg class="a" style="left:1432.40px;top:620.25px;" width="32.80" height="32.71" viewBox="0 0 24 24"><path fill="#757575" d="M12 8l-6 6 1.41 1.41L12 10.83l4.59 4.58L18 14z"/></svg>
<div class="t" style="left:526.70px;top:691.53px;font-size:23px;transform:scaleX(1.0016);color:#212121;">Place the .text section in RAM</div>
<div class="t" style="left:526.70px;top:735.83px;font-size:23px;transform:scaleX(0.9850);color:#212121;">Place RO section in RAM</div>
<div class="a" style="left:1018.40px;top:690.00px;width:24.20px;height:23.30px;border:2.5px solid #6b6b6b;border-radius:2.5px"></div>
<div class="a" style="left:1018.40px;top:734.60px;width:24.20px;height:23.90px;border:2.5px solid #6b6b6b;border-radius:2.5px"></div>
<div class="a" style="left:495.75px;top:791.95px;width:1004.50px;height:262.60px;border:1.5px solid #dedede;border-radius:7px"></div>
<div class="t" style="left:519.30px;top:819.45px;font-size:22.5px;font-weight:700;transform:scaleX(0.9635);color:#212121;">Define Code and Data sizes</div>
<svg class="a" style="left:1432.40px;top:809.65px;" width="32.80" height="32.71" viewBox="0 0 24 24"><path fill="#757575" d="M12 8l-6 6 1.41 1.41L12 10.83l4.59 4.58L18 14z"/></svg>
<div class="t" style="left:526.70px;top:879.73px;font-size:23px;transform:scaleX(0.9800);color:#212121;">Code size in Flash (in kB)</div>
<div class="t" style="left:1009.00px;top:879.73px;font-size:23px;transform:scaleX(0.9500);color:#212121;">48</div>
<div class="a" style="left:1008.00px;top:906.00px;width:462.00px;height:2.00px;background:#8a8a8a"></div>
<div class="t" style="left:526.70px;top:924.53px;font-size:23px;transform:scaleX(0.9800);color:#212121;">Code size in RAM (in kB)</div>
<div class="t" style="left:1009.00px;top:924.53px;font-size:23px;transform:scaleX(0.9500);color:#212121;">0</div>
<div class="a" style="left:1008.00px;top:951.00px;width:462.00px;height:2.00px;background:#8a8a8a"></div>
<div class="t" style="left:526.70px;top:969.83px;font-size:23px;transform:scaleX(0.9800);color:#212121;">RW Data size in RAM (in kB)</div>
<div class="t" style="left:1009.00px;top:969.83px;font-size:23px;transform:scaleX(0.9500);color:#212121;">16</div>
<div class="a" style="left:1008.00px;top:996.00px;width:462.00px;height:2.00px;background:#8a8a8a"></div>
<div class="t" style="left:526.70px;top:1014.33px;font-size:23px;transform:scaleX(0.9784);color:#212121;">RO Data size in Flash / RAM (in kB)</div>
<div class="t" style="left:1009.00px;top:1014.33px;font-size:23px;transform:scaleX(0.9500);color:#212121;">16</div>
<div class="a" style="left:1008.00px;top:1040.00px;width:465.70px;height:2.00px;background:#8a8a8a"></div>
<div class="a" style="left:495.75px;top:1069.75px;width:1004.50px;height:271.50px;border:1.5px solid #dedede;border-radius:7px"></div>
<div class="t" style="left:519.30px;top:1096.95px;font-size:22.5px;font-weight:700;transform:scaleX(0.9651);color:#212121;">Peripheral Access</div>
<svg class="a" style="left:1432.60px;top:1087.55px;" width="32.80" height="32.71" viewBox="0 0 24 24"><path fill="#757575" d="M12 8l-6 6 1.41 1.41L12 10.83l4.59 4.58L18 14z"/></svg>
<div class="t" style="left:526.70px;top:1183.83px;font-size:23px;transform:scaleX(0.9920);color:#212121;">Peripherals with RW access</div>
<div class="a" style="left:1000px;top:1140px;width:371px;height:50px;overflow:hidden">
<div class="t" style="left:9.00px;top:16.93px;font-size:23px;transform:scaleX(0.8977);color:#212121;">ADCA_RESULT_REGS, EPWM1_REGS</div>
</div>
<div class="a" style="left:1008.00px;top:1184.00px;width:325.00px;height:16.70px;background:#e3e3e3"></div>
<svg class="a" style="left:1442.00px;top:1188.80px;overflow:visible" width="16.70" height="8.80" viewBox="0 0 10 5"><path d="M0 0h10L5 5z" fill="#6f6f6f"/></svg>
<div class="a" style="left:1008.00px;top:1235.00px;width:462.00px;height:2.00px;background:#8a8a8a"></div>
<div class="t" style="left:526.70px;top:1253.83px;font-size:23px;transform:scaleX(0.9920);color:#212121;">Peripherals with RO access</div>
<div class="t" style="left:1009.00px;top:1251.53px;font-size:23px;transform:scaleX(0.9675);color:#a6a6a6;">None</div>
<svg class="a" style="left:1442.00px;top:1260.00px;overflow:visible" width="16.70" height="8.50" viewBox="0 0 10 5"><path d="M0 0h10L5 5z" fill="#6f6f6f"/></svg>
<div class="a" style="left:1008.00px;top:1281.00px;width:462.00px;height:2.00px;background:#8a8a8a"></div>
<div class="t" style="left:526.70px;top:1300.23px;font-size:23px;transform:scaleX(1.0195);color:#212121;">Interrupts Included in this module</div>
<div class="t" style="left:1009.00px;top:1298.03px;font-size:23px;transform:scaleX(0.9564);color:#212121;">myADC01_INT</div>
<svg class="a" style="left:1446.00px;top:1306.00px;overflow:visible" width="16.80" height="8.40" viewBox="0 0 10 5"><path d="M0 0h10L5 5z" fill="#6f6f6f"/></svg>
<div class="a" style="left:1008.00px;top:1327.00px;width:465.70px;height:2.00px;background:#8a8a8a"></div>
<div class="a" style="left:495.75px;top:1356.75px;width:1004.50px;height:244.00px;border:1.5px solid #dedede;border-radius:7px"></div>
<div class="t" style="left:519.30px;top:1384.25px;font-size:22.5px;font-weight:700;transform:scaleX(0.9697);color:#212121;">Module Memory Regions</div>
<svg class="a" style="left:1432.60px;top:1374.35px;" width="32.80" height="32.71" viewBox="0 0 24 24"><path fill="#757575" d="M12 8l-6 6 1.41 1.41L12 10.83l4.59 4.58L18 14z"/></svg>
<div class="a" style="left:507.55px;top:1437.75px;width:980.60px;height:68.50px;border:1.5px solid #dedede;border-radius:7px"></div>
<div class="t" style="left:532.00px;top:1464.95px;font-size:22.5px;font-weight:700;transform:scaleX(0.9334);color:#212121;">codeAPR_Flash</div>
<svg class="a" style="left:1420.60px;top:1456.47px;" width="32.40" height="31.09" viewBox="0 0 24 24"><path fill="#757575" d="M16.59 8.59L12 13.17 7.41 8.59 6 10l6 6 6-6z"/></svg>
<div class="a" style="left:507.55px;top:1521.25px;width:980.60px;height:79.50px;border:1.5px solid #dedede;border-radius:7px"></div>
<div class="a" style="left:1540.00px;top:598.00px;width:17.00px;height:772.50px;background:#e3e3e3"></div>
<div class="a" style="left:1568.00px;top:57.20px;width:1200.00px;height:1600.00px;border:1.5px solid #d9d9d9;border-radius:6px;background:#fff"></div>
<div class="t" style="left:1591.60px;top:64.43px;font-size:23px;transform:scaleX(1.0025);color:#212121;">linker.cmd</div>
<svg class="a" style="left:2493.30px;top:55.55px;" width="37.20" height="38.70" viewBox="0 0 24 24"><path fill="#757575" d="M12 8c1.1 0 2-.9 2-2s-.9-2-2-2-2 .9-2 2 .9 2 2 2zm0 2c-1.1 0-2 .9-2 2s.9 2 2 2 2-.9 2-2-.9-2-2-2zm0 6c-1.1 0-2 .9-2 2s.9 2 2 2 2-.9 2-2-.9-2-2-2z"/></svg>
<svg class="a" style="left:2544.72px;top:57.70px;" width="34.27" height="34.40" viewBox="0 0 24 24"><path fill="#757575" d="M17 3H5c-1.11 0-2 .9-2 2v14c0 1.1.89 2 2 2h14c1.1 0 2-.9 2-2V7l-4-4zm-5 16c-1.66 0-3-1.34-3-3s1.34-3 3-3 3 1.34 3 3-1.34 3-3 3zm3-10H5V5h10v4z"/></svg>
<svg class="a" style="left:2595.03px;top:59.12px;" width="31.54" height="32.06" viewBox="0 0 24 24"><path fill="#757575" d="M19 6.41L17.59 5 12 10.59 6.41 5 5 6.41 10.59 12 5 17.59 6.41 19 12 13.41 17.59 19 19 17.59 13.41 12z"/></svg>
<div class="a" style="left:1569.50px;top:91.00px;width:1094.00px;height:1436.00px;background:#fffffe"></div>
<div class="a" style="left:1569.5px;top:91px;width:1072px;height:1436px;overflow:hidden">
<div class="m" style="left:0;width:63.80px;top:2.20px;text-align:right;color:#237893">82</div>
<div class="m" style="left:0;width:63.80px;top:33.70px;text-align:right;color:#237893">83</div>
<div class="m" style="left:0;width:63.80px;top:65.20px;text-align:right;color:#237893">84</div>
<div class="m" style="left:0;width:63.80px;top:96.70px;text-align:right;color:#237893">85</div>
<div class="m" style="left:0;width:63.80px;top:128.20px;text-align:right;color:#237893">86</div>
<div class="m" style="left:0;width:63.80px;top:159.70px;text-align:right;color:#237893">87</div>
<div class="m" style="left:0;width:63.80px;top:191.20px;text-align:right;color:#237893">88</div>
<div class="m" style="left:0;width:63.80px;top:222.70px;text-align:right;color:#237893">89</div>
<div class="m" style="left:0;width:63.80px;top:254.20px;text-align:right;color:#237893">90</div>
<div class="m" style="left:0;width:63.80px;top:285.70px;text-align:right;color:#237893">91</div>
<div class="m" style="left:0;width:63.80px;top:317.20px;text-align:right;color:#237893">92</div>
<div class="m" style="left:0;width:63.80px;top:348.70px;text-align:right;color:#237893">93</div>
<div class="m" style="left:0;width:63.80px;top:380.20px;text-align:right;color:#237893">94</div>
<div class="m" style="left:0;width:63.80px;top:411.70px;text-align:right;color:#237893">95</div>
<div class="m" style="left:0;width:63.80px;top:443.20px;text-align:right;color:#237893">96</div>
<div class="m" style="left:0;width:63.80px;top:474.70px;text-align:right;color:#237893">97</div>
<div class="m" style="left:0;width:63.80px;top:506.20px;text-align:right;color:#237893">98</div>
<div class="m" style="left:0;width:63.80px;top:537.70px;text-align:right;color:#237893">99</div>
<div class="m" style="left:0;width:63.80px;top:569.20px;text-align:right;color:#237893">100</div>
<div class="m" style="left:0;width:63.80px;top:600.70px;text-align:right;color:#237893">101</div>
<div class="m" style="left:0;width:63.80px;top:632.20px;text-align:right;color:#237893">102</div>
<div class="m" style="left:0;width:63.80px;top:663.70px;text-align:right;color:#237893">103</div>
<div class="m" style="left:0;width:63.80px;top:695.20px;text-align:right;color:#237893">104</div>
<div class="m" style="left:0;width:63.80px;top:726.70px;text-align:right;color:#237893">105</div>
<div class="m" style="left:0;width:63.80px;top:758.20px;text-align:right;color:#237893">106</div>
<div class="m" style="left:0;width:63.80px;top:789.70px;text-align:right;color:#237893">107</div>
<div class="m" style="left:0;width:63.80px;top:821.20px;text-align:right;color:#237893">108</div>
<div class="m" style="left:0;width:63.80px;top:852.70px;text-align:right;color:#237893">109</div>
<div class="m" style="left:0;width:63.80px;top:884.20px;text-align:right;color:#237893">110</div>
<div class="m" style="left:0;width:63.80px;top:915.70px;text-align:right;color:#237893">111</div>
<div class="m" style="left:0;width:63.80px;top:947.20px;text-align:right;color:#237893">112</div>
<div class="m" style="left:0;width:63.80px;top:978.70px;text-align:right;color:#237893">113</div>
<div class="m" style="left:0;width:63.80px;top:1010.20px;text-align:right;color:#237893">114</div>
<div class="m" style="left:0;width:63.80px;top:1041.70px;text-align:right;color:#237893">115</div>
<div class="m" style="left:0;width:63.80px;top:1073.20px;text-align:right;color:#237893">116</div>
<div class="m" style="left:0;width:63.80px;top:1104.70px;text-align:right;color:#237893">117</div>
<div class="m" style="left:0;width:63.80px;top:1136.20px;text-align:right;color:#237893">118</div>
<div class="m" style="left:0;width:63.80px;top:1167.70px;text-align:right;color:#237893">119</div>
<div class="m" style="left:0;width:63.80px;top:1199.20px;text-align:right;color:#237893">120</div>
<div class="m" style="left:0;width:63.80px;top:1230.70px;text-align:right;color:#237893">121</div>
<div class="m" style="left:0;width:63.80px;top:1262.20px;text-align:right;color:#237893">122</div>
<div class="m" style="left:0;width:63.80px;top:1293.70px;text-align:right;color:#237893">123</div>
<div class="m" style="left:0;width:63.80px;top:1325.20px;text-align:right;color:#237893">124</div>
<div class="m" style="left:0;width:63.80px;top:1356.70px;text-align:right;color:#237893">125</div>
<div class="m" style="left:0;width:63.80px;top:1388.20px;text-align:right;color:#237893">126</div>
<div class="m" style="left:0;width:63.80px;top:1419.70px;text-align:right;color:#237893">127</div>
<div class="m" style="left:109.50px;top:2.20px;color:#000">    .LINK2_dataAPR_RO : {</div>
<div class="m" style="left:109.50px;top:33.70px;color:#000">        libc.a&lt;copy_zero_init.c.obj&gt;(.rodata .const)</div>
<div class="a" style="left:158.96px;top:32.00px;width:1px;height:31.90px;background:#d3d3d3"></div>
<div class="m" style="left:109.50px;top:65.20px;color:#000">        libc.a&lt;pre_init.c.obj&gt;(.rodata .const)</div>
<div class="a" style="left:158.96px;top:63.50px;width:1px;height:31.90px;background:#d3d3d3"></div>
<div class="m" style="left:109.50px;top:96.70px;color:#000">        libc.a&lt;exit.c.obj&gt;(.rodata .const)</div>
<div class="a" style="left:158.96px;top:95.00px;width:1px;height:31.90px;background:#d3d3d3"></div>
<div class="m" style="left:109.50px;top:128.20px;color:#000">        libc.a&lt;startup.c.obj&gt;(.rodata .const)</div>
<div class="a" style="left:158.96px;top:126.50px;width:1px;height:31.90px;background:#d3d3d3"></div>
<div class="m" style="left:109.50px;top:159.70px;color:#000">        rtos.o.o(.rodata .const)</div>
<div class="a" style="left:158.96px;top:158.00px;width:1px;height:31.90px;background:#d3d3d3"></div>
<div class="m" style="left:109.50px;top:191.20px;color:#000">        myrtos.lib&lt;*&gt;(.rodata .const)</div>
<div class="a" style="left:158.96px;top:189.50px;width:1px;height:31.90px;background:#d3d3d3"></div>
<div class="m" style="left:109.50px;top:222.70px;color:#000">    }     &gt; LINK2_DATAAPR_RO, palign(8)</div>
<div class="m" style="left:109.50px;top:285.70px;color:#000">    .ControlLoop1_codeAPR_Flash : SECURE_GROUP(STACK2_STACK) {</div>
<div class="m" style="left:109.50px;top:317.20px;color:#000">        cloop1.o(.text)</div>
<div class="a" style="left:158.96px;top:315.50px;width:1px;height:31.90px;background:#d3d3d3"></div>
<div class="m" style="left:109.50px;top:348.70px;color:#000">        driverlib.lib&lt;adc.o&gt;(.text)</div>
<div class="a" style="left:158.96px;top:347.00px;width:1px;height:31.90px;background:#d3d3d3"></div>
<div class="m" style="left:109.50px;top:380.20px;color:#000">    }     &gt; CONTROLLOOP1_CODEAPR_FLASH, palign(8)</div>
<div class="m" style="left:109.50px;top:443.20px;color:#000">    .ControlLoop1_dataAPR_RW : {</div>
<div class="m" style="left:109.50px;top:474.70px;color:#000">        cloop1.o(.bss .data)</div>
<div class="a" style="left:158.96px;top:473.00px;width:1px;height:31.90px;background:#d3d3d3"></div>
<div class="m" style="left:109.50px;top:506.20px;color:#000">        driverlib.lib&lt;adc.o&gt;(.bss .data)</div>
<div class="a" style="left:158.96px;top:504.50px;width:1px;height:31.90px;background:#d3d3d3"></div>
<div class="m" style="left:109.50px;top:537.70px;color:#000">    }     &gt; CONTROLLOOP1_DATAAPR_RW</div>
<div class="m" style="left:109.50px;top:600.70px;color:#000">    .ControlLoop1_dataAPR_RO : {</div>
<div class="m" style="left:109.50px;top:632.20px;color:#000">        cloop1.o(.rodata .const)</div>
<div class="a" style="left:158.96px;top:630.50px;width:1px;height:31.90px;background:#d3d3d3"></div>
<div class="m" style="left:109.50px;top:663.70px;color:#000">        driverlib.lib&lt;adc.o&gt;(.rodata .const)</div>
<div class="a" style="left:158.96px;top:662.00px;width:1px;height:31.90px;background:#d3d3d3"></div>
<div class="m" style="left:109.50px;top:695.20px;color:#000">    }     &gt; CONTROLLOOP1_DATAAPR_RO, palign(8)</div>
<div class="m" style="left:109.50px;top:758.20px;color:#000">    .ControlLoop2_codeAPR_Flash : SECURE_GROUP(STACK2_STACK) {</div>
<div class="m" style="left:109.50px;top:789.70px;color:#000">        cloop2_timers.o(.text)</div>
<div class="a" style="left:158.96px;top:788.00px;width:1px;height:31.90px;background:#d3d3d3"></div>
<div class="m" style="left:109.50px;top:821.20px;color:#000">    }     &gt; CONTROLLOOP2_CODEAPR_FLASH, palign(8)</div>
<div class="m" style="left:109.50px;top:884.20px;color:#000">    .ControlLoop2_codeAPR_RAM : SECURE_GROUP(STACK2_STACK) {</div>
<div class="m" style="left:109.50px;top:915.70px;color:#000">        cloop2_timers.o(.TI.ramfunc)</div>
<div class="a" style="left:158.96px;top:914.00px;width:1px;height:31.90px;background:#d3d3d3"></div>
<div class="m" style="left:109.50px;top:947.20px;color:#000">    }     &gt; CONTROLLOOP2_CODEAPR_RAM</div>
<div class="m" style="left:109.50px;top:1010.20px;color:#000">    .ControlLoop2_dataAPR_RW : {</div>
<div class="m" style="left:109.50px;top:1041.70px;color:#000">        cloop2_timers.o(.bss .data)</div>
<div class="a" style="left:158.96px;top:1040.00px;width:1px;height:31.90px;background:#d3d3d3"></div>
<div class="m" style="left:109.50px;top:1073.20px;color:#000">    }     &gt; CONTROLLOOP2_DATAAPR_RW</div>
<div class="m" style="left:109.50px;top:1136.20px;color:#000">    .ControlLoop2_dataAPR_RO : {</div>
<div class="m" style="left:109.50px;top:1167.70px;color:#000">        cloop2_timers.o(.rodata .const)</div>
<div class="a" style="left:158.96px;top:1166.00px;width:1px;height:31.90px;background:#d3d3d3"></div>
<div class="m" style="left:109.50px;top:1199.20px;color:#000">    }     &gt; CONTROLLOOP2_DATAAPR_RO, palign(8)</div>
<div class="m" style="left:109.50px;top:1262.20px;color:#000">    .CommonCodeModule_codeAPR_Flash : SECURE_GROUP(STACK2_STACK_COMMONCODE) {</div>
<div class="m" style="left:109.50px;top:1293.70px;color:#000">        error.o(.text)</div>
<div class="a" style="left:158.96px;top:1292.00px;width:1px;height:31.90px;background:#d3d3d3"></div>
<div class="m" style="left:109.50px;top:1325.20px;color:#000">        libc.a&lt;*&gt;(.text)</div>
<div class="a" style="left:158.96px;top:1323.50px;width:1px;height:31.90px;background:#d3d3d3"></div>
<div class="m" style="left:109.50px;top:1356.70px;color:#000">        libclang_rt.builtins.a&lt;*&gt;(.text)</div>
<div class="a" style="left:158.96px;top:1355.00px;width:1px;height:31.90px;background:#d3d3d3"></div>
<div class="m" style="left:109.50px;top:1388.20px;color:#000">    }     &gt; COMMONCODEMODULE_CODEAPR_FLASH, palign(8)</div>
<div class="a" style="left:108.70px;top:0;width:1.6px;height:1436px;background:#c4c4c4"></div>
<div class="a" style="left:0;top:0;width:1072px;height:7px;background:linear-gradient(180deg,rgba(0,0,0,.09),rgba(0,0,0,0))"></div>
</div>
<div class="a" style="left:2641.30px;top:91.00px;width:1.00px;height:1436.00px;background:#e2e2e2"></div>
<div class="a" style="left:2642.30px;top:91.00px;width:21.00px;height:3.00px;background:#8a8a8a"></div>
<div class="a" style="left:2642.30px;top:707.00px;width:21.00px;height:354.00px;background:#c3c3c3"></div>
<div class="a" style="left:2641.30px;top:707.00px;width:1.20px;height:354.00px;background:#a9a9a9"></div>
</body></html>
